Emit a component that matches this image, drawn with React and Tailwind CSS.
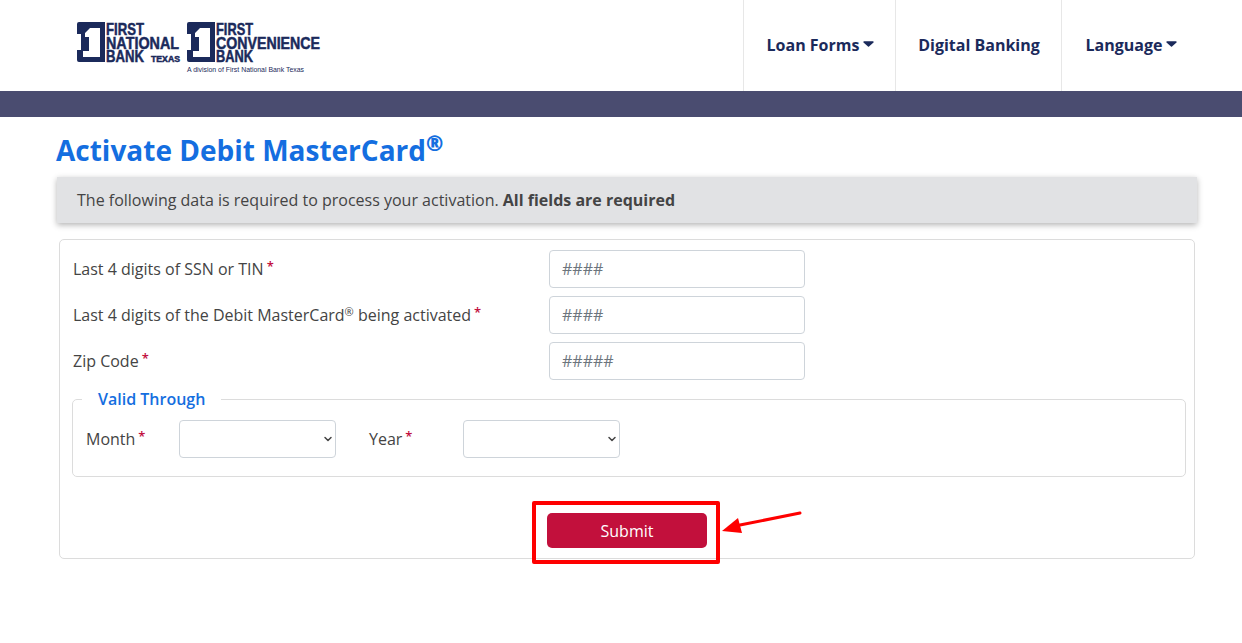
import React from 'react';
import { ChevronDown } from 'lucide-react';

const navy = '#1b2a5b';

const Badge = ({ x }) => (
    <g transform={`translate(${x} 0)`}>
        <path d="M2 22H28V62H2a2 2 0 0 1-2-2V50H4V34H0V24a2 2 0 0 1 2-2z" fill={navy} />
        <path d="M8 37V33L13 28H23V57H6V51H12V37z" fill="#fff" />
    </g>
);

const Logo = () => (
    <svg width="275" height="55" viewBox="77 20 275 55" fontFamily="'Liberation Sans', sans-serif" fontWeight="700" fill={navy}>
        <Badge x={77} />
        <g stroke={navy} strokeWidth="0.5">
            <text x="106" y="35" fontSize="17" textLength="38" lengthAdjust="spacingAndGlyphs">FIRST</text>
            <text x="106" y="48.5" fontSize="17" textLength="73" lengthAdjust="spacingAndGlyphs">NATIONAL</text>
            <text x="106" y="62" fontSize="17" textLength="38" lengthAdjust="spacingAndGlyphs">BANK</text>
            <text x="151" y="62" fontSize="9" textLength="29" lengthAdjust="spacingAndGlyphs">TEXAS</text>
        </g>
        <Badge x={187} />
        <g stroke={navy} strokeWidth="0.5">
            <text x="216" y="35" fontSize="17" textLength="37" lengthAdjust="spacingAndGlyphs">FIRST</text>
            <text x="216" y="48.5" fontSize="17" textLength="104" lengthAdjust="spacingAndGlyphs">CONVENIENCE</text>
            <text x="216" y="62" fontSize="17" textLength="37" lengthAdjust="spacingAndGlyphs">BANK</text>
        </g>
        <text x="187" y="72" fontSize="7" fontWeight="400" textLength="117" lengthAdjust="spacingAndGlyphs">A division of First National Bank Texas</text>
    </svg>
);

const Caret = () => (
    <svg width="11" height="6" viewBox="0 0 11 6" className="ml-[4px] mt-[-1px]">
        <path d="M1 0.3h9a0.7 0.7 0 0 1 0.5 1.2L6 5.6a0.7 0.7 0 0 1-1 0L0.5 1.5A0.7 0.7 0 0 1 1 0.3z" fill={navy} />
    </svg>
);

const Req = () => <span className="text-[#c21040] ml-[3px] text-[13px] leading-none font-semibold align-[4px]">*</span>;

const Select = () => (
    <div className="relative w-[157px] h-[38px] border border-[#ced4da] rounded bg-white">
        <ChevronDown className="absolute right-[1px] top-[12px] w-[12px] h-[12px] text-[#444]" strokeWidth={3} />
    </div>
);

const fields = [
    { id: 'ssn', label: <>Last 4 digits of SSN or TIN</>, placeholder: '####' },
    { id: 'card', label: <>Last 4 digits of the Debit MasterCard<sup className="text-[11px]">®</sup> being activated</>, placeholder: '####' },
    { id: 'zip', label: <>Zip Code</>, placeholder: '#####' }
];

const App = () => {
    return (
        <div className="min-h-[643px] bg-white font-['Open_Sans',sans-serif] text-[#444]">
            {/* Header */}
            <header className="h-[91px] flex justify-between pl-[77px] pr-[42px]">
                <div className="pt-[20px]">
                    <Logo />
                </div>
                <nav className="flex text-[16px] font-bold text-[#1b2a5b]">
                    <a className="w-[152px] pb-[2px] pl-[2px] flex items-center justify-center border-l border-[#e7e7e7]">Loan Forms<Caret /></a>
                    <a className="w-[166px] pb-[2px] pl-[1px] flex items-center justify-center border-l border-[#e7e7e7]">Digital Banking</a>
                    <a className="w-[139px] pb-[2px] pl-[1px] flex items-center justify-center border-l border-[#e7e7e7]">Language<Caret /></a>
                </nav>
            </header>
            <div className="h-[26px] bg-[#4a4c70]" />

            {/* Content */}
            <main className="pl-[57px] pr-[45px]">
                <h1 className="h-[60px] pt-[12px] -ml-[1px] text-[28px] leading-[42px] font-bold text-[#146ee0] whitespace-nowrap">
                    Activate Debit MasterCard<sup className="text-[21px] font-extrabold">®</sup>
                </h1>
                <div className="h-[46px] flex items-center pl-[20px] bg-[#e1e2e4] text-[16px] text-[#444] shadow-[0_2px_6px_rgba(0,0,0,0.3)]">
                    <span>The following data is required to process your activation. <b className="font-bold">All fields are required</b></span>
                </div>

                <div className="relative mx-[2px] mt-[16px] h-[320px] border border-[#dcdcdc] rounded-[5px] pl-[12px] pr-[8px] pt-[10px]">
                    <div className="flex flex-col gap-[8px]">
                        {fields.map((f) => (
                            <div key={f.id} className="flex items-center h-[38px]">
                                <label className="w-[477px] pl-[1px] text-[16px] whitespace-nowrap">{f.label}<Req /></label>
                                <div className="w-[256px] h-[38px] border border-[#ced4da] rounded flex items-center pl-[12px] text-[16px] text-[#6c757d]">
                                    {f.placeholder}
                                </div>
                            </div>
                        ))}
                    </div>

                    {/* Valid through */}
                    <fieldset className="mt-[9px] h-[88px] border border-[#dcdcdc] rounded-[5px] pl-[13px] pr-[12px]">
                        <legend className="-ml-[4px] px-[16px] text-[16px] leading-[20px] font-semibold text-[#146ee0]">Valid Through</legend>
                        <div className="flex items-center mt-[11px] text-[16px]">
                            <span className="w-[93px]">Month<Req /></span>
                            <Select />
                            <span className="w-[94px] ml-[33px]">Year<Req /></span>
                            <Select />
                        </div>
                    </fieldset>

                    <div className="flex justify-center mt-[36px] pr-[4px]">
                        <button className="w-[160px] h-[35px] bg-[#c2103c] rounded-[5px] text-white text-[16px] font-normal">Submit</button>
                    </div>

                    {/* Annotation */}
                    <div className="absolute left-[472px] top-[261px] w-[188px] h-[63px] border-4 border-[#fe0000] rounded-[2px]" />
                    <svg className="absolute left-[660px] top-[268px]" width="86" height="32" viewBox="0 0 86 32">
                        <path d="M20 17L80 5" stroke="#fe0000" strokeWidth="3" strokeLinecap="round" />
                        <path d="M2 23L18 10l4 15z" fill="#fe0000" />
                    </svg>
                </div>
            </main>
        </div>
    );
};

export default App;
